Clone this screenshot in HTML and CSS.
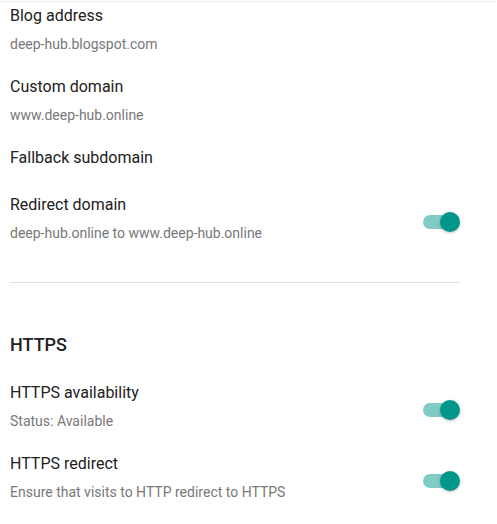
FILE: index.html
```html
<!DOCTYPE html>
<html>
<head>
<meta charset="utf-8">
<link rel="stylesheet" href="styles.css">
</head>
<body>
<div class="topline"></div>
<div class="page">
  <div class="item">
    <div class="text">
      <div class="title">Blog address</div>
      <div class="sub">deep-hub.blogspot.com</div>
    </div>
  </div>
  <div class="item">
    <div class="text">
      <div class="title">Custom domain</div>
      <div class="sub">www.deep-hub.online</div>
    </div>
  </div>
  <div class="item item-nosub">
    <div class="text">
      <div class="title">Fallback subdomain</div>
    </div>
  </div>
  <div class="item">
    <div class="text">
      <div class="title">Redirect domain</div>
      <div class="sub">deep-hub.online to www.deep-hub.online</div>
    </div>
    <div class="toggle"><span class="track"></span><span class="thumb"></span></div>
  </div>
  <div class="divider"></div>
  <div class="heading">HTTPS</div>
  <div class="item">
    <div class="text">
      <div class="title">HTTPS availability</div>
      <div class="sub">Status: Available</div>
    </div>
    <div class="toggle"><span class="track"></span><span class="thumb"></span></div>
  </div>
  <div class="item">
    <div class="text">
      <div class="title">HTTPS redirect</div>
      <div class="sub">Ensure that visits to HTTP redirect to HTTPS</div>
    </div>
    <div class="toggle"><span class="track"></span><span class="thumb"></span></div>
  </div>
</div>
</body>
</html>
```
FILE: styles.css
```css
html, body {
  margin: 0;
  padding: 0;
  background: #ffffff;
}
body {
  font-family: Roboto, "Liberation Sans", sans-serif;
  color: #212121;
}
.topline {
  margin-top: 1px;
  height: 1px;
  width: 495px;
  background: #ececec;
}
.page {
  width: 450px;
  margin-left: 10px;
  padding-top: 2px;
  display: flex;
  flex-direction: column;
  gap: 20px;
}
.item {
  display: flex;
  align-items: center;
  justify-content: space-between;
}
.item-nosub {
  padding-bottom: 3px;
}
.text {
  display: flex;
  flex-direction: column;
}
.title {
  font-size: 16px;
  line-height: 24px;
  color: #212121;
}
.sub {
  font-size: 14px;
  line-height: 20px;
  margin-top: 6px;
  margin-bottom: 1px;
  color: #787878;
}
.divider {
  height: 1px;
  background: #e0e0e0;
  margin-top: 18px;
  margin-bottom: 30px;
}
.heading {
  font-size: 18px;
  font-weight: 500;
  line-height: 24px;
  color: #202124;
  margin-bottom: 4px;
}
.toggle {
  display: flex;
  align-items: center;
  margin-top: 6px;
}
.track {
  display: block;
  width: 34px;
  height: 14px;
  border-radius: 7px;
  background: #80cbc4;
}
.thumb {
  display: block;
  width: 20px;
  height: 20px;
  border-radius: 50%;
  margin-left: -17px;
  background: #009688;
  box-shadow: 0 1px 3px rgba(0, 0, 0, 0.25);
}
```
